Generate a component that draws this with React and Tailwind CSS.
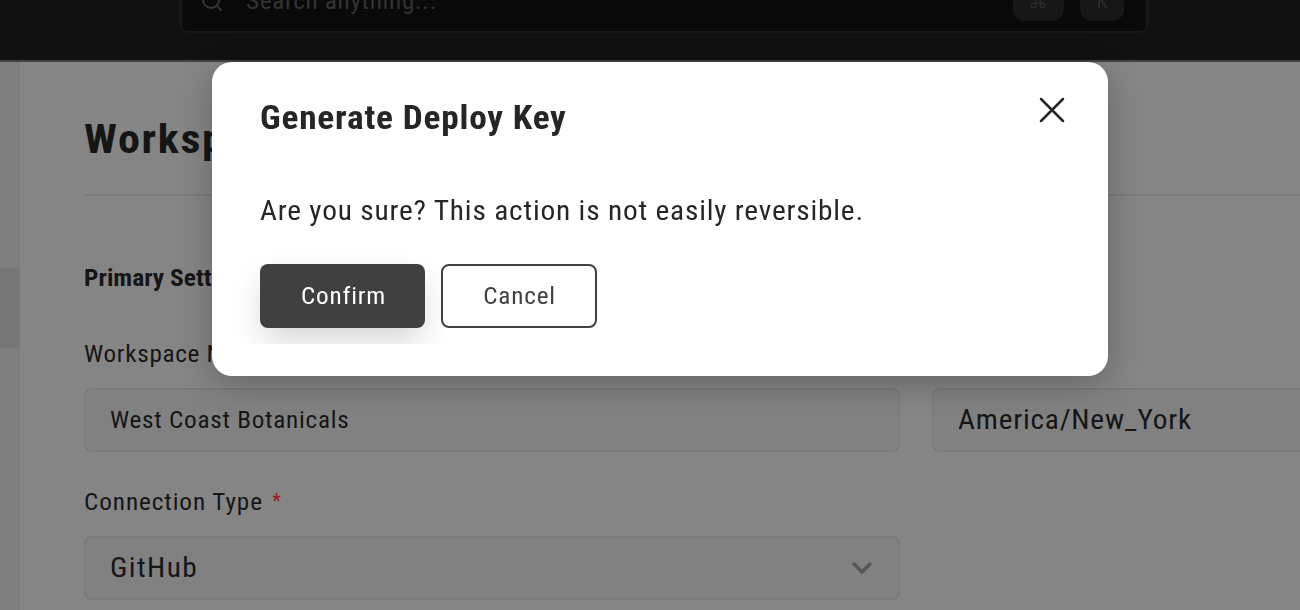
import { Search, Command } from "lucide-react";

function Label({ children, required }) {
  return (
    <label className="flex h-8 text-2xl leading-8 whitespace-nowrap">
      <span className={required ? "origin-left scale-x-105 tracking-[0.87px]" : "origin-left scale-x-105 tracking-[0.65px]"}>{children}</span>
      {required && <span className="ml-[18px] text-xl leading-[30px] text-[#9a1616]">*</span>}
    </label>
  );
}

function Field({ children }) {
  return (
    <div className="mt-[18px] flex h-16 items-center justify-between rounded-lg border-2 border-[#7a7a7a] bg-[#818181] pr-[26px] pl-6 whitespace-nowrap">
      {children}
    </div>
  );
}

function Header() {
  return (
    <header className="h-[62px] shrink-0 overflow-hidden border-b-2 border-[#434143] bg-[#111111] pl-[180px]">
      <div className="-mt-8 flex h-[65px] w-[968px] items-center rounded-lg border-2 border-[#171717] bg-[#090909] pr-[22px] pl-[18px] text-[#333333]">
        <Search className="size-6 text-[#363636]" strokeWidth={2} />
        <span className="ml-[22px] origin-left scale-x-105 text-2xl leading-8 tracking-[0.65px]">Search anything...</span>
        <kbd className="mr-4 ml-auto flex h-10 w-[51px] items-center justify-center rounded-xl bg-[#171717] text-[#2b2b2b]">
          <Command className="-ml-px size-[18px]" strokeWidth={2} />
        </kbd>
        <kbd className="flex h-10 w-11 items-center justify-center rounded-xl bg-[#171717] font-['Roboto_Condensed',sans-serif] text-xl leading-5 text-[#2b2b2b]">K</kbd>
      </div>
    </header>
  );
}

function Dialog() {
  return (
    <div className="fixed inset-0 flex items-start pt-[62px] pl-[212px]">
      <div role="dialog" className="h-[314px] w-[896px] rounded-[20px] bg-white text-[#262626] shadow-[0_8px_32px_rgba(0,0,0,0.24)]">
        <div className="flex h-[104px] justify-between pt-8 pr-10 pl-12">
          <h2 className="origin-left scale-x-[1.07] text-[33px] leading-[48px] font-bold tracking-[0.75px]">Generate Deploy Key</h2>
          <button className="size-8" aria-label="Close">
            <svg viewBox="0 0 32 32" className="size-8" stroke="currentColor" strokeWidth="2.5" strokeLinecap="round">
              <path d="M5 5 27 27M27 5 5 27" />
            </svg>
          </button>
        </div>
        <div className="h-[178px] overflow-hidden px-12 pt-[25px]">
          <p className="inline-block origin-left scale-x-105 text-[28px] leading-10 tracking-[0.76px] whitespace-nowrap">Are you sure? This action is not easily reversible.</p>
          <div className="mt-[33px] flex gap-4 text-2xl tracking-[0.75px]">
            <button className="h-16 w-[165px] rounded-lg bg-[#404040] text-white shadow-[0_14px_32px_-4px_rgba(0,0,0,0.18)]">
              <span className="inline-block scale-x-105 pl-0.5">Confirm</span>
            </button>
            <button className="h-16 w-[156px] rounded-lg border-2 border-[#404040] bg-white text-[#404040]">
              <span className="inline-block scale-x-105 pl-px">Cancel</span>
            </button>
          </div>
        </div>
      </div>
    </div>
  );
}

export default function App() {
  return (
    <div className="flex h-[610px] w-[1300px] flex-col overflow-hidden bg-[#858585] font-['Roboto_Condensed',sans-serif] text-[#151515]">
      <Header />
      <div className="flex min-h-0 flex-1">
        <aside className="w-5 shrink-0 bg-[#7f7f7f] pt-[206px]">
          <div className="h-20 bg-[#767676]" />
        </aside>
        <main className="w-[1280px] overflow-hidden pl-16">
          <div className="h-[134px] border-b-2 border-[#7b7b7b] pt-[50px]">
            <h1 className="inline-block origin-left scale-x-110 text-[40px] leading-[56px] font-bold tracking-[1.5px]">Workspace</h1>
          </div>
          <h2 className="mt-16 h-9 w-44 origin-left scale-x-106 text-2xl leading-9 font-bold">Primary Settings</h2>
          <div className="mt-[42px] grid grid-cols-[816px_816px] gap-x-8 gap-y-[34px]">
            <div>
              <Label>Workspace Name</Label>
              <Field><span className="origin-left scale-x-105 text-2xl tracking-[0.7px]">West Coast Botanicals</span></Field>
            </div>
            <div className="pt-8">
              <Field><span className="origin-left scale-x-105 text-[28px] tracking-[0.74px]">America/New_York</span></Field>
            </div>
            <div>
              <Label required>Connection Type</Label>
              <Field>
                <span className="origin-left scale-x-105 text-[28px] tracking-[1.35px]">GitHub</span>
                <svg viewBox="0 0 20 12" className="h-3 w-5" fill="none" stroke="#565656" strokeWidth="3.4">
                  <path d="m1 1 9 9 9-9" />
                </svg>
              </Field>
            </div>
          </div>
        </main>
      </div>
      <Dialog />
    </div>
  );
}
